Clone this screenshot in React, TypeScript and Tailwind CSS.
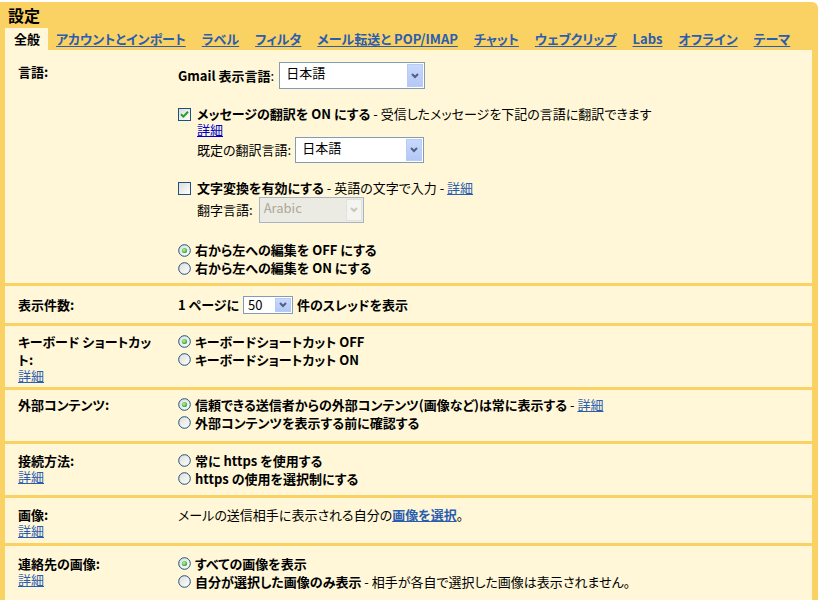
import React from "react";

function Checkbox({ checked }: { checked?: boolean }) {
  return (
    <span className="inline-flex w-[13px] h-[13px] shrink-0 items-center justify-center border border-[#1c5180] bg-[linear-gradient(135deg,#dcdcd7,#ffffff)]">
      {checked && (
        <svg width="9" height="9" viewBox="0 0 9 9">
          <path d="M1 4.2 L3.4 6.6 L8 1.8" stroke="#21a121" strokeWidth="2" fill="none" />
        </svg>
      )}
    </span>
  );
}

function Radio({ checked }: { checked?: boolean }) {
  return (
    <svg width="13" height="13" viewBox="0 0 13 13" className="shrink-0">
      <defs>
        <linearGradient id="rg" x1="0" y1="0" x2="1" y2="1">
          <stop offset="0" stopColor="#dcdcd7" />
          <stop offset="1" stopColor="#ffffff" />
        </linearGradient>
        <radialGradient id="dot" cx="0.4" cy="0.4" r="0.7">
          <stop offset="0" stopColor="#b4f2a6" />
          <stop offset="1" stopColor="#21a121" />
        </radialGradient>
      </defs>
      <circle cx="6.5" cy="6.5" r="5.8" fill="url(#rg)" stroke="#1c5180" strokeWidth="1" />
      {checked && <circle cx="6.5" cy="6.5" r="2.6" fill="url(#dot)" />}
    </svg>
  );
}

function Arrow({ disabled }: { disabled?: boolean }) {
  return (
    <span
      className={
        disabled
          ? "flex w-[16px] self-stretch m-[1px] items-center justify-center border border-[#e2e2dc] bg-[#f4f4f0]"
          : "flex w-[16px] self-stretch m-[1px] items-center justify-center border border-[#b9cbf3] bg-[linear-gradient(#c9d8fc,#b4c8f6)]"
      }
    >
      <svg width="8" height="6" viewBox="0 0 8 6">
        <path d="M1 1 L4 4 L7 1" stroke={disabled ? "#c9c7ba" : "#4d6185"} strokeWidth="2" fill="none" />
      </svg>
    </span>
  );
}

function RadioRow({ checked, children }: { checked?: boolean; children: React.ReactNode }) {
  return (
    <div className="flex h-[18px] items-center gap-[4px]">
      <Radio checked={checked} />
      <span>{children}</span>
    </div>
  );
}

function Detail({ bright }: { bright?: boolean }) {
  return (
    <a className={bright ? "text-[#0000cc] underline" : "text-[#2a5db0] underline"}>詳細</a>
  );
}

function Label({ children, detail }: { children: React.ReactNode; detail?: boolean }) {
  return (
    <div className="w-[160px] shrink-0">
      <div className="font-bold leading-[18px]">{children}</div>
      {detail && (
        <div className="leading-[14px]">
          <Detail />
        </div>
      )}
    </div>
  );
}

export default function App() {
  const tabs = ["アカウントとインポート", "ラベル", "フィルタ", "メール転送と POP/IMAP", "チャット", "ウェブクリップ", "Labs", "オフライン", "テーマ"];
  return (
    <div className="w-[820px] h-[600px] overflow-hidden bg-white pt-[2px] text-[13px] text-black font-['Noto_Sans_CJK_JP','Noto_Sans',sans-serif] [font-feature-settings:'palt']">
      <div className="w-[818px] h-[598px] flex flex-col bg-[#fad163] rounded-tr-[6px] pl-[5px] pr-[6px]">
        <div className="h-[26px] pl-[3px] text-[16px] font-bold leading-[26px]">設定</div>
        <div className="flex h-[22px] items-center">
          <div className="h-full flex items-center bg-[#fff7d7] pl-[9px] pr-[8px] font-bold">全般</div>
          <div className="flex items-center gap-[16px] ml-[8px] font-bold">
            {tabs.map((t) => (
              <a key={t} className="text-[#2a5db0] underline underline-offset-2">{t}</a>
            ))}
          </div>
        </div>
        <div className="flex-1 bg-[#fff7d7] flex flex-col">
          {/* 言語 */}
          <div className="flex pl-[13px] pt-[12px] pb-[6px] border-b-[3px] border-[#fad163]">
            <div className="w-[160px] shrink-0 pt-[1px] font-bold leading-[18px]">言語:</div>
            <div className="flex flex-col">
              <div className="flex items-center">
                <b>Gmail 表示言語</b>:
                <div className="ml-[5px] flex w-[146px] h-[27px] border border-[#7f9db9] bg-white">
                  <span className="flex-1 pl-[6px] pt-[1px] leading-[18px]">日本語</span>
                  <Arrow />
                </div>
              </div>
              <div className="mt-[17px] flex h-[16px] items-center gap-[6px]">
                <Checkbox checked />
                <span>
                  <b>メッセージの翻訳を ON にする</b> - 受信したメッセージを下記の言語に翻訳できます
                </span>
              </div>
              <div className="pl-[19px] leading-[15px]">
                <Detail bright />
              </div>
              <div className="pl-[19px] flex items-center">
                <span>既定の翻訳言語:</span>
                <div className="ml-[4px] flex w-[129px] h-[26px] border border-[#7f9db9] bg-white">
                  <span className="flex-1 pl-[6px] pt-[1px] leading-[18px]">日本語</span>
                  <Arrow />
                </div>
              </div>
              <div className="mt-[17px] flex h-[16px] items-center gap-[6px]">
                <Checkbox />
                <span>
                  <b>文字変換を有効にする</b> - 英語の文字で入力 - <Detail />
                </span>
              </div>
              <div className="pl-[19px] mt-[1px] flex items-center">
                <span>翻字言語:</span>
                <div className="ml-[6px] flex w-[105px] h-[26px] border border-[#a5b4c6] bg-[#ebebe4]">
                  <span className="flex-1 pl-[4px] pt-[1px] leading-[18px] text-[#aca899]">Arabic</span>
                  <Arrow disabled />
                </div>
              </div>
              <div className="mt-[18px] font-bold">
                <RadioRow checked>右から左への編集を OFF にする</RadioRow>
                <RadioRow>右から左への編集を ON にする</RadioRow>
              </div>
            </div>
          </div>
          {/* 表示件数 */}
          <div className="flex pl-[13px] pt-[9px] pb-[8px] border-b-[3px] border-[#fad163]">
            <div className="w-[160px] shrink-0 pt-[1px] font-bold leading-[18px]">表示件数:</div>
            <div className="flex items-center font-bold">
              <span>1 ページに</span>
              <div className="ml-[4px] flex w-[50px] h-[18px] border border-[#7f9db9] bg-white font-normal">
                <span className="flex-1 pl-[4px] leading-[16px]">50</span>
                <Arrow />
              </div>
              <span className="ml-[4px]">件のスレッドを表示</span>
            </div>
          </div>
          {/* キーボード ショートカット */}
          <div className="flex pl-[13px] pt-[7px] pb-[4px] border-b-[3px] border-[#fad163]">
            <Label detail>
              キーボード ショートカッ
              <br />
              ト:
            </Label>
            <div className="font-bold">
              <RadioRow checked>キーボードショートカット OFF</RadioRow>
              <RadioRow>キーボードショートカット ON</RadioRow>
            </div>
          </div>
          {/* 外部コンテンツ */}
          <div className="flex pl-[13px] pt-[6px] pb-[9px] border-b-[3px] border-[#fad163]">
            <Label>外部コンテンツ:</Label>
            <div>
              <RadioRow checked>
                <b>信頼できる送信者からの外部コンテンツ(画像など)は常に表示する</b> - <Detail />
              </RadioRow>
              <RadioRow>
                <b>外部コンテンツを表示する前に確認する</b>
              </RadioRow>
            </div>
          </div>
          {/* 接続方法 */}
          <div className="flex pl-[13px] pt-[8px] pb-[7px] border-b-[3px] border-[#fad163]">
            <Label detail>接続方法:</Label>
            <div className="font-bold">
              <RadioRow>常に https を使用する</RadioRow>
              <RadioRow>https の使用を選択制にする</RadioRow>
            </div>
          </div>
          {/* 画像 */}
          <div className="flex pl-[13px] pt-[8px] pb-[5px] border-b-[3px] border-[#fad163]">
            <Label detail>画像:</Label>
            <div className="leading-[18px]">
              メールの送信相手に表示される自分の<a className="font-bold text-[#2a5db0] underline">画像を選択</a>。
            </div>
          </div>
          {/* 連絡先の画像 */}
          <div className="flex pl-[13px] pt-[9px] pb-[6px]">
            <Label detail>連絡先の画像:</Label>
            <div>
              <RadioRow checked>
                <b>すべての画像を表示</b>
              </RadioRow>
              <RadioRow>
                <b>自分が選択した画像のみ表示</b> - 相手が各自で選択した画像は表示されません。
              </RadioRow>
            </div>
          </div>
        </div>
      </div>
    </div>
  );
}
